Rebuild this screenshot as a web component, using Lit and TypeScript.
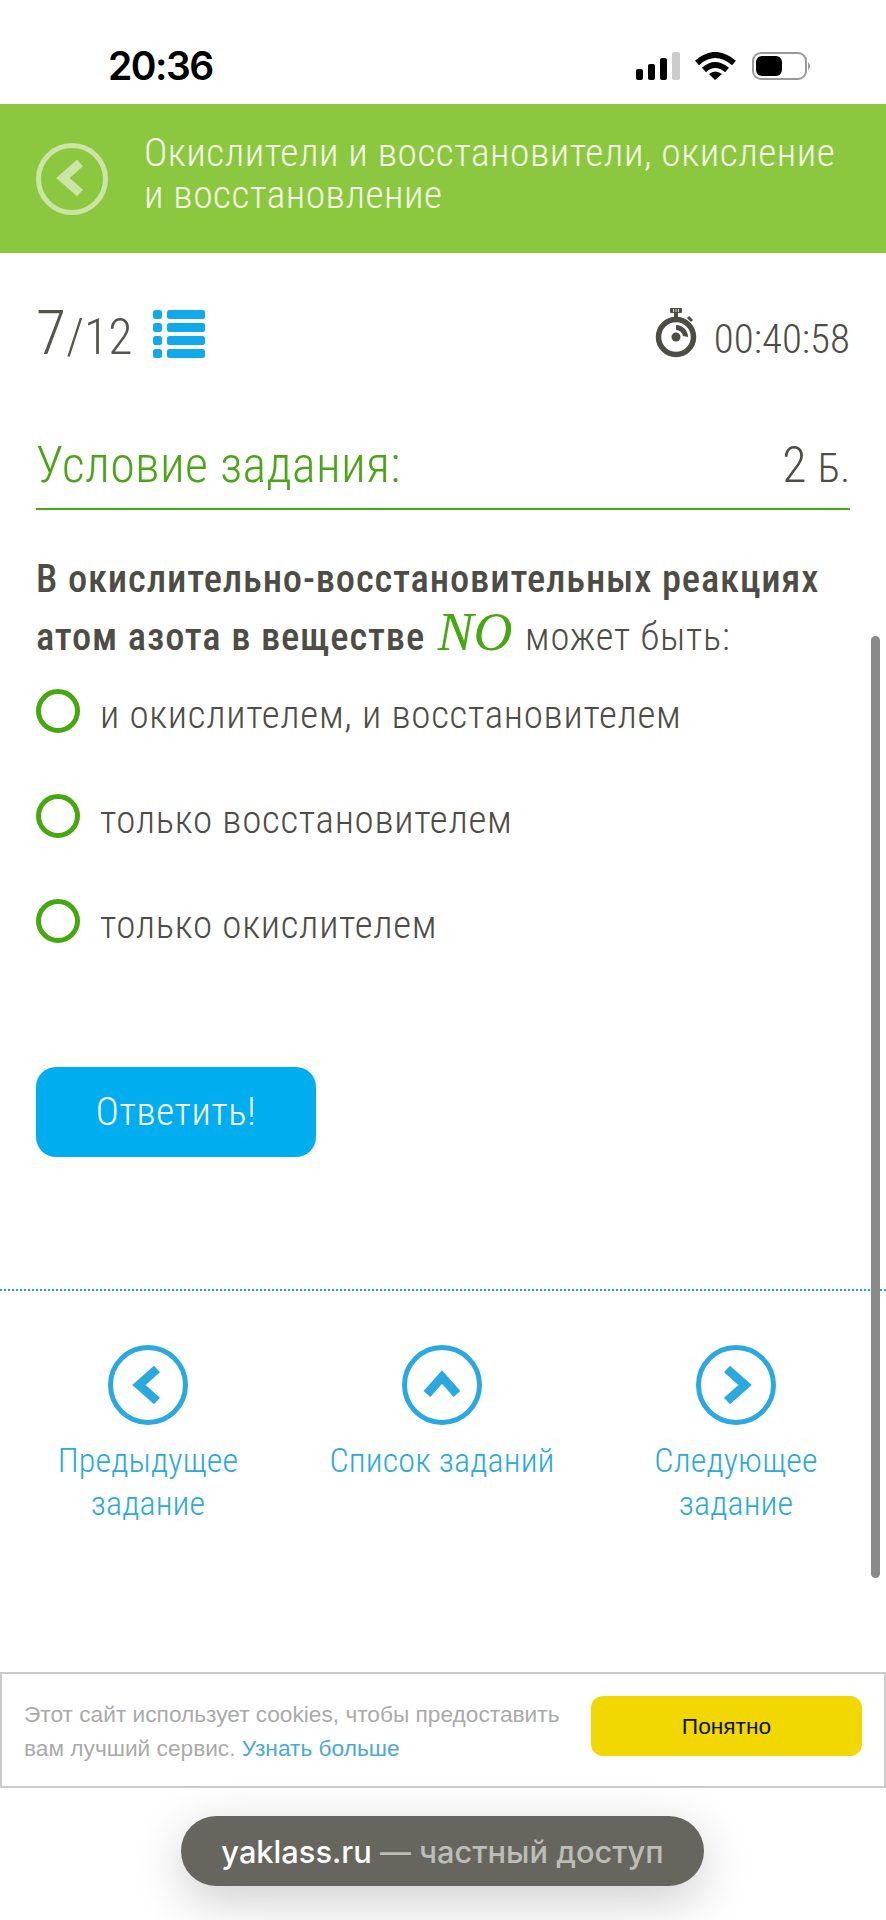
import { LitElement, html, svg, css } from "lit";
import { customElement } from "lit/decorators.js";

const chevron = (d: string) => html`<svg class="nav-ic" viewBox="0 0 80 80"><circle cx="40" cy="40" r="37.5" fill="none" stroke="#29a9e0" stroke-width="5"/><path d="${d}" fill="none" stroke="#29a9e0" stroke-width="9"/></svg>`;

@customElement("app-root")
export class AppRoot extends LitElement {
  static styles = css`
    :host { display: block; position: relative; width: 886px; height: 1920px; overflow: hidden; background: #fff; font-family: Roboto, "Noto Sans", sans-serif; font-weight: 300; font-stretch: 85%; color: #4d4d45; }
    .status { height: 104px; box-sizing: border-box; padding: 44px 73px 0 108px; display: flex; justify-content: space-between; align-items: flex-start; }
    .time { font: 600 39px/44px "Inter", sans-serif; font-stretch: normal; letter-spacing: -1.5px; color: #000; }
    .status-ic { margin-top: 8px; display: block; }
    .head { height: 149px; background: #8cc83f; display: flex; align-items: center; padding: 0 36px; box-sizing: border-box; gap: 36px; color: #fff; }
    .head h1 { margin: 0; font-size: 39.5px; letter-spacing: .48px; line-height: 42px; font-weight: 300; color: #f4fbe8; padding-bottom: 10px; }
    .back { flex: none; display: block; }
    .meta { display: flex; justify-content: space-between; align-items: flex-start; padding: 48px 36px 0 36px; height: 127px; box-sizing: border-box; }
    .count { display: flex; align-items: flex-start; gap: 20px; }
    .num { font-size: 50px; line-height: 64px; color: #55554d; }
    .num b { font-weight: 300; font-size: 62px; }
    .list { margin-top: 9px; display: block; }
    .timer { display: flex; gap: 17px; align-items: flex-start; }
    .timer-ic { margin-top: 7px; display: block; }
    .clock { font-size: 41px; line-height: 44px; margin-top: 16px; }
    .cond { display: flex; justify-content: space-between; align-items: center; margin: 57px 36px 0; padding: 0 0 15px 0; border-bottom: 2px solid #4aa616; }
    .cond h2 { margin: 0; font-size: 50px; letter-spacing: .35px; font-weight: 300; color: #4aa616; line-height: 56px; }
    .pts { font-size: 50px; line-height: 56px; }
    .pts small { font-size: 41px; line-height: 0; }
    .q { margin: 40px 36px 0; font-size: 38.5px; letter-spacing: .85px; line-height: 58px; }
    .q b { font-weight: 480; }
    .q i { font: italic 54px/0 "Liberation Serif", serif; letter-spacing: 0; color: #46a80f; margin: 0 3px; }
    .opts { margin: 23px 36px 0; display: flex; flex-direction: column; }
    .opt { height: 105px; display: flex; align-items: flex-start; gap: 20px; font-size: 39px; letter-spacing: .7px; line-height: 44px; }
    .opt span:last-child { padding-top: 4px; }
    .radio { width: 44px; height: 44px; box-sizing: border-box; border: 5px solid #46a80f; border-radius: 50%; flex: none; }
    .btn { margin: 63px 0 0 36px; width: 280px; height: 90px; border-radius: 20px; background: #00aef0; color: #fff; font-size: 39px; letter-spacing: .6px; display: flex; align-items: center; justify-content: center; }
    .rule { margin-top: 132px; border-top: 2px dotted #29a0c8; }
    .nav { display: grid; grid-template-columns: 294px 294px 294px; padding: 54px 0 0 1px; text-align: center; color: #29a9e0; font-size: 34px; letter-spacing: .15px; line-height: 43px; }
    .nav-item { display: flex; flex-direction: column; align-items: center; gap: 14px; }
    .nav-ic { width: 80px; height: 80px; display: block; }
    .scroll { position: absolute; left: 871px; top: 636px; width: 9px; height: 942px; background: #8a8a8a; border-radius: 5px; }
    .cookie { position: absolute; left: 0; top: 1672px; width: 886px; height: 116px; box-sizing: border-box; border: 2px solid #ccc; background: #fff; display: flex; align-items: flex-start; padding: 22px 22px 0 22px; justify-content: space-between; font: 400 22.7px/34px "Liberation Sans", sans-serif; font-stretch: normal; color: #aaa; }
    .cookie-text { padding-top: 1px; }
    .cookie a { color: #4aa8dc; }
    .ok { width: 271px; height: 60px; background: #f0d800; border-radius: 12px; color: #111; display: flex; align-items: center; justify-content: center; }
    .pill { position: absolute; left: 181px; top: 1816px; width: 523px; height: 70px; border-radius: 35px; background: #66665f; box-shadow: 0 14px 50px rgba(0,0,0,.2); display: flex; align-items: center; justify-content: center; font: 500 30.8px "Inter", sans-serif; font-stretch: normal; color: #fff; white-space: pre; }
    .pill span { color: #bdbdb8; }
  `;
  render() {
    return html`
      <div class="status">
        <div class="time">20:36</div>
        <svg class="status-ic" width="177" height="28" viewBox="0 0 177 28">
          <rect x="0" y="17" width="7" height="11" rx="2"/><rect x="12" y="12" width="7" height="16" rx="2"/><rect x="24" y="6" width="7" height="22" rx="2"/><rect x="36" y="0" width="8" height="28" rx="2" fill="#ccc"/>
          <path d="M61 11 Q79 -5 98 11" fill="none" stroke="#000" stroke-width="6"/><path d="M68 18 Q79 8 91 18" fill="none" stroke="#000" stroke-width="6"/><path d="M73 22 Q79 17 86 22 L79 28 Z"/>
          <rect x="117" y="1" width="53" height="26" rx="8" fill="none" stroke="#999" stroke-width="2"/><rect x="120" y="4" width="26" height="20" rx="6"/><path d="M172 10 Q176 14 172 18 Z" fill="#999"/>
        </svg>
      </div>
      <div class="head">
        <svg class="back" width="72" height="72" viewBox="0 0 72 72"><circle cx="36" cy="36" r="33.5" fill="none" stroke="#cbe5a8" stroke-width="5"/><path d="M44 20 L27 35 L44 50" fill="none" stroke="#cbe5a8" stroke-width="9"/></svg>
        <h1>Окислители и восстановители, окисление<br />и восстановление</h1>
      </div>
      <div class="meta">
        <div class="count">
          <div class="num"><b>7</b>/12</div>
          <svg class="list" width="52" height="48" viewBox="0 0 52 48" fill="#0fa9ec">
            ${[0, 13, 26, 39].map((y) => svg`<rect x="0" y="${y}" width="9" height="9" rx="2.5"/><rect x="14" y="${y}" width="38" height="9" rx="2.5"/>`)}
          </svg>
        </div>
        <div class="timer">
          <svg class="timer-ic" width="42" height="50" viewBox="0 0 42 50">
            <rect x="15" y="0" width="12" height="5" rx="1" fill="#4d4d45"/><path d="M18.5 1v3M21 1v3M23.5 1v3" stroke="#fff" stroke-width=".8"/><rect x="19" y="5" width="4" height="4" fill="#4d4d45"/>
            <circle cx="21" cy="29" r="17.5" fill="none" stroke="#4d4d45" stroke-width="5.5"/>
            <path d="M33 9 L37 13" stroke="#4d4d45" stroke-width="3"/>
            <circle cx="21" cy="29" r="4.5" fill="#4d4d45"/>
            <path d="M21 17 A12 12 0 0 1 33 29 L28 28 A7 7 0 0 0 21 22 Z" fill="#4d4d45"/>
          </svg>
          <div class="clock">00:40:58</div>
        </div>
      </div>
      <div class="cond"><h2>Условие задания:</h2><div class="pts">2 <small>Б.</small></div></div>
      <div class="q"><b>В окислительно-восстановительных реакциях атом азота в веществе</b> <i>NO</i> может быть:</div>
      <div class="opts">
        ${["и окислителем, и восстановителем", "только восстановителем", "только окислителем"].map((t) => html`<div class="opt"><span class="radio"></span><span>${t}</span></div>`)}
      </div>
      <div class="btn">Ответить!</div>
      <div class="rule"></div>
      <div class="nav">
        <div class="nav-item">${chevron("M49 24 L31 40 L49 56")}<div>Предыдущее<br />задание</div></div>
        <div class="nav-item">${chevron("M25 49 L40 32 L55 49")}<div>Список заданий</div></div>
        <div class="nav-item">${chevron("M31 24 L49 40 L31 56")}<div>Следующее<br />задание</div></div>
      </div>
      <div class="scroll"></div>
      <div class="cookie"><div class="cookie-text">Этот сайт использует cookies, чтобы предоставить<br />вам лучший сервис. <a>Узнать больше</a></div><div class="ok">Понятно</div></div>
      <div class="pill">yaklass.ru<span> — частный доступ</span></div>
    `;
  }
}
